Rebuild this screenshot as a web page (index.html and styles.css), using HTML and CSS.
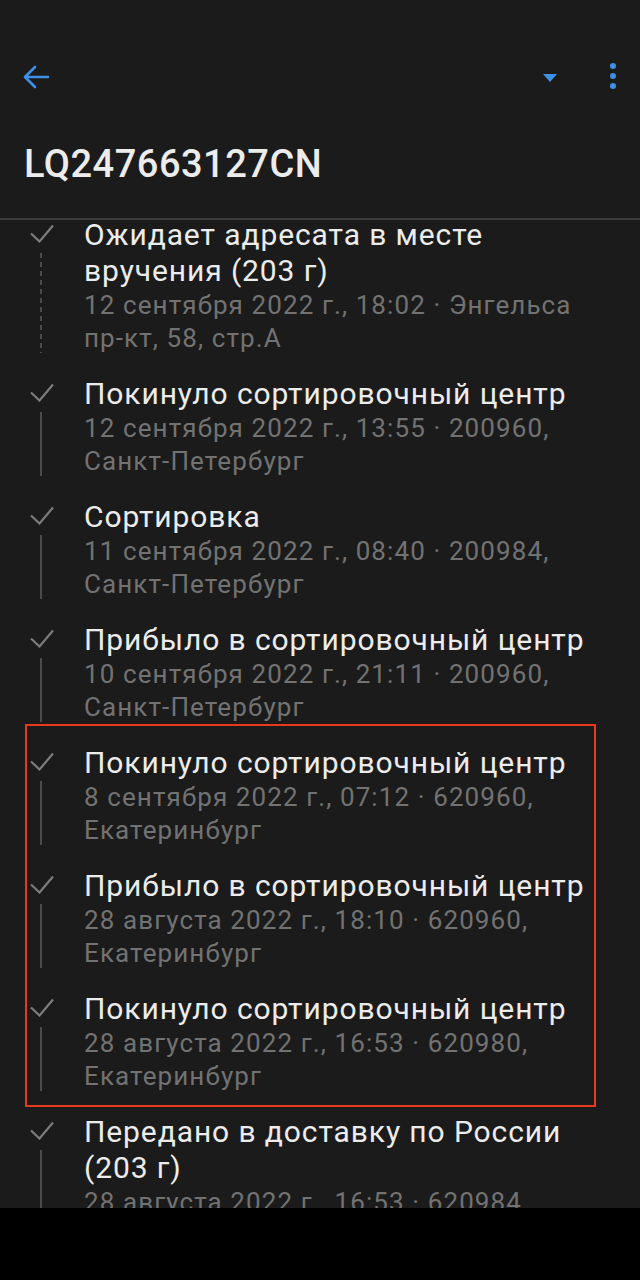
FILE: index.html
```html
<!DOCTYPE html>
<html lang="ru">
<head>
  <meta charset="UTF-8" />
  <title>LQ247663127CN</title>
  <meta name="viewport" content="width=device-width, initial-scale=1.0" />
  <link rel="stylesheet" href="styles.css">
</head>
<body>
  <div class="screen">
    <div class="toolbar">
      <svg class="back" width="28" height="24" viewBox="0 0 28 24">
        <path d="M26 12H4M13 2L3 12l10 10" fill="none" stroke="#3d8fe8" stroke-width="2.6" stroke-linecap="round" stroke-linejoin="round"/>
      </svg>
      <div class="spacer"></div>
      <svg class="drop" width="14" height="8" viewBox="0 0 14 8">
        <path d="M0 0h14L7 8z" fill="#3d8fe8"/>
      </svg>
      <div class="dots">
        <span></span><span></span><span></span>
      </div>
    </div>

    <h1 class="track">LQ247663127CN</h1>

    <div class="list">
      <div class="item dashed">
        <div class="mark">
          <svg class="check" width="24" height="19" viewBox="0 0 24 19"><path d="M1 9.5l8.5 8L23 1.5" fill="none" stroke="#7c7c7c" stroke-width="2.2"/></svg>
          <span class="line"></span>
        </div>
        <div class="body">
          <div class="status">Ожидает адресата в месте вручения (203 г)</div>
          <div class="meta">12 сентября 2022 г., 18:02 · Энгельса пр-кт, 58, стр.А</div>
        </div>
      </div>

      <div class="item">
        <div class="mark">
          <svg class="check" width="24" height="19" viewBox="0 0 24 19"><path d="M1 9.5l8.5 8L23 1.5" fill="none" stroke="#7c7c7c" stroke-width="2.2"/></svg>
          <span class="line"></span>
        </div>
        <div class="body">
          <div class="status">Покинуло сортировочный центр</div>
          <div class="meta">12 сентября 2022 г., 13:55 · 200960, Санкт&#8209;Петербург</div>
        </div>
      </div>

      <div class="item">
        <div class="mark">
          <svg class="check" width="24" height="19" viewBox="0 0 24 19"><path d="M1 9.5l8.5 8L23 1.5" fill="none" stroke="#7c7c7c" stroke-width="2.2"/></svg>
          <span class="line"></span>
        </div>
        <div class="body">
          <div class="status">Сортировка</div>
          <div class="meta">11 сентября 2022 г., 08:40 · 200984, Санкт&#8209;Петербург</div>
        </div>
      </div>

      <div class="item">
        <div class="mark">
          <svg class="check" width="24" height="19" viewBox="0 0 24 19"><path d="M1 9.5l8.5 8L23 1.5" fill="none" stroke="#7c7c7c" stroke-width="2.2"/></svg>
          <span class="line"></span>
        </div>
        <div class="body">
          <div class="status">Прибыло в сортировочный центр</div>
          <div class="meta">10 сентября 2022 г., 21:11 · 200960, Санкт&#8209;Петербург</div>
        </div>
      </div>

      <div class="highlight">
        <div class="item">
          <div class="mark">
            <svg class="check" width="24" height="19" viewBox="0 0 24 19"><path d="M1 9.5l8.5 8L23 1.5" fill="none" stroke="#7c7c7c" stroke-width="2.2"/></svg>
            <span class="line"></span>
          </div>
          <div class="body">
            <div class="status">Покинуло сортировочный центр</div>
            <div class="meta">8 сентября 2022 г., 07:12 · 620960, Екатеринбург</div>
          </div>
        </div>

        <div class="item">
          <div class="mark">
            <svg class="check" width="24" height="19" viewBox="0 0 24 19"><path d="M1 9.5l8.5 8L23 1.5" fill="none" stroke="#7c7c7c" stroke-width="2.2"/></svg>
            <span class="line"></span>
          </div>
          <div class="body">
            <div class="status">Прибыло в сортировочный центр</div>
            <div class="meta">28 августа 2022 г., 18:10 · 620960, Екатеринбург</div>
          </div>
        </div>

        <div class="item">
          <div class="mark">
            <svg class="check" width="24" height="19" viewBox="0 0 24 19"><path d="M1 9.5l8.5 8L23 1.5" fill="none" stroke="#7c7c7c" stroke-width="2.2"/></svg>
            <span class="line"></span>
          </div>
          <div class="body">
            <div class="status">Покинуло сортировочный центр</div>
            <div class="meta">28 августа 2022 г., 16:53 · 620980, Екатеринбург</div>
          </div>
        </div>
      </div>

      <div class="item">
        <div class="mark">
          <svg class="check" width="24" height="19" viewBox="0 0 24 19"><path d="M1 9.5l8.5 8L23 1.5" fill="none" stroke="#7c7c7c" stroke-width="2.2"/></svg>
          <span class="line"></span>
        </div>
        <div class="body">
          <div class="status">Передано в доставку по России (203 г)</div>
          <div class="meta">28 августа 2022 г., 16:53 · 620984, Екатеринбург</div>
        </div>
      </div>
    </div>

    <div class="navbar"></div>
  </div>
</body>
</html>
```

FILE: styles.css
```css
body {
  margin: 0;
  background: #000;
  font-family: Roboto, "Noto Sans", sans-serif;
}

.screen {
  width: 640px;
  height: 1280px;
  background: #1b1b1b;
  display: flex;
  flex-direction: column;
  overflow: hidden;
}

.toolbar {
  height: 48px;
  margin-top: 53px;
  display: flex;
  align-items: center;
  padding: 0 24px 0 22px;
}

.spacer {
  flex: 1;
}

.drop {
  margin-right: 53px;
  margin-top: 2px;
}

.dots {
  display: flex;
  flex-direction: column;
  gap: 4px;
  margin-top: -2px;
}

.dots span {
  width: 6px;
  height: 6px;
  border-radius: 50%;
  background: #3d8fe8;
}

.track {
  margin: 0;
  padding: 43px 24px 34px;
  font-size: 38px;
  line-height: 40px;
  font-weight: 500;
  letter-spacing: 0.5px;
  color: #ececec;
  border-bottom: 2px solid #3a3a3a;
}

.list {
  flex: 1;
  overflow: hidden;
  margin-top: -3px;
}

.item {
  display: flex;
  padding-bottom: 21px;
}

.mark {
  width: 84px;
  flex-shrink: 0;
  display: flex;
  flex-direction: column;
}

.check {
  display: block;
  margin: 7px 0 0 30px;
}

.line {
  flex: 1;
  width: 2px;
  margin: 10px 0 2px 40px;
  background: #4b4b4b;
}

.dashed .line {
  background: repeating-linear-gradient(#4b4b4b 0 5px, transparent 5px 9px);
}

.body {
  flex: 1;
  padding-right: 40px;
}

.status {
  font-size: 30px;
  line-height: 36px;
  letter-spacing: 0.9px;
  color: #ececec;
}

.meta {
  font-size: 26px;
  line-height: 33px;
  letter-spacing: 1.1px;
  color: #727272;
}

.highlight {
  position: relative;
}

.highlight::after {
  content: "";
  position: absolute;
  left: 25px;
  top: -21px;
  width: 567px;
  height: 379px;
  border: 2px solid #e8391f;
  pointer-events: none;
}

.navbar {
  position: absolute;
  left: 0;
  top: 1208px;
  width: 640px;
  height: 72px;
  background: #000;
}
```
